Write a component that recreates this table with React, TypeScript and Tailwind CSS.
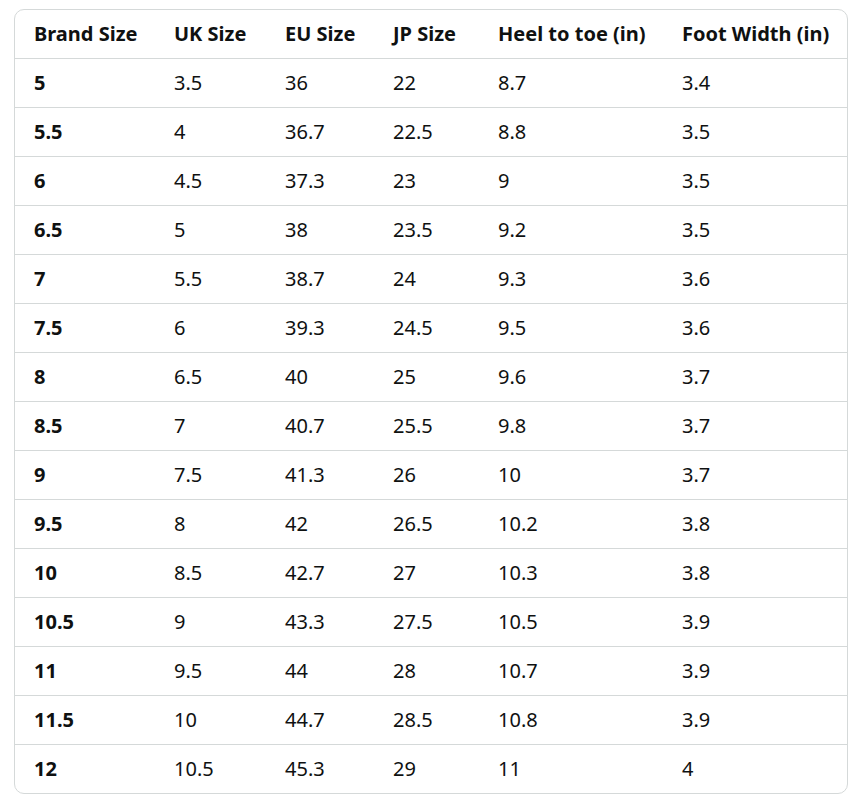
const headers = ["Brand Size", "UK Size", "EU Size", "JP Size", "Heel to toe (in)", "Foot Width (in)"];
const rows: string[][] = [
  ["5", "3.5", "36", "22", "8.7", "3.4"],
  ["5.5", "4", "36.7", "22.5", "8.8", "3.5"],
  ["6", "4.5", "37.3", "23", "9", "3.5"],
  ["6.5", "5", "38", "23.5", "9.2", "3.5"],
  ["7", "5.5", "38.7", "24", "9.3", "3.6"],
  ["7.5", "6", "39.3", "24.5", "9.5", "3.6"],
  ["8", "6.5", "40", "25", "9.6", "3.7"],
  ["8.5", "7", "40.7", "25.5", "9.8", "3.7"],
  ["9", "7.5", "41.3", "26", "10", "3.7"],
  ["9.5", "8", "42", "26.5", "10.2", "3.8"],
  ["10", "8.5", "42.7", "27", "10.3", "3.8"],
  ["10.5", "9", "43.3", "27.5", "10.5", "3.9"],
  ["11", "9.5", "44", "28", "10.7", "3.9"],
  ["11.5", "10", "44.7", "28.5", "10.8", "3.9"],
  ["12", "10.5", "45.3", "29", "11", "4"],
];
const widths = ["w-[140px]", "w-[111px]", "w-[108px]", "w-[105px]", "w-[184px]", "w-[185px]"];

export default function App() {
  return (
    <div className="bg-white min-h-[810px] pl-[14px] pt-[9px]" style={{ fontFamily: '"Noto Sans", "Open Sans", sans-serif' }}>
      <div className="w-[834px] border border-[#d5d9d9] rounded-[10px] overflow-hidden text-[#0f1111] text-[20px]">
        <div className="flex h-[48px] items-center">
          {headers.map((h, i) => (
            <div key={h} className={`${widths[i]} shrink-0 pl-[19px] font-bold whitespace-nowrap`}>{h}</div>
          ))}
        </div>
        {rows.map((r, ri) => (
          <div key={ri} className="flex h-[49px] items-center border-t border-[#d5d9d9]">
            {r.map((c, i) => (
              <div key={i} className={`${widths[i]} shrink-0 pl-[19px] ${i === 0 ? "font-bold" : ""}`}>{c}</div>
            ))}
          </div>
        ))}
      </div>
    </div>
  );
}
